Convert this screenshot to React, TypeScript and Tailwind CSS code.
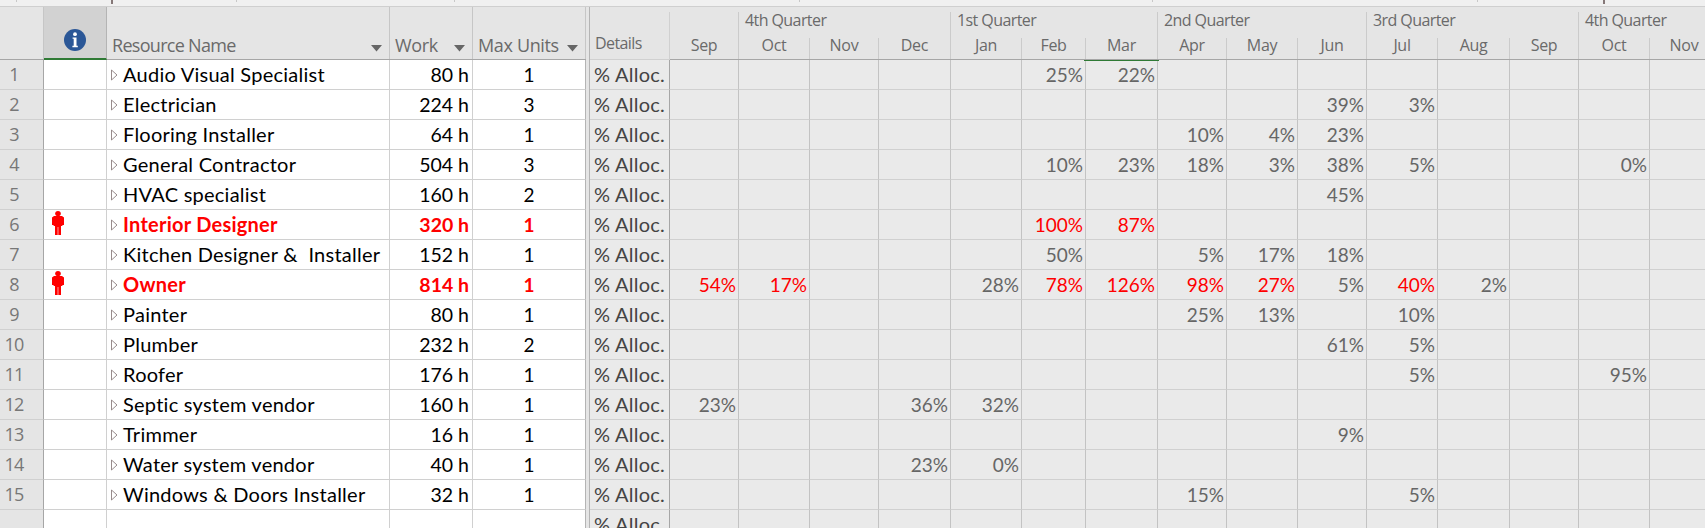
import { clsx } from "clsx";

type Resource = {
  name: string;
  work: string;
  units: number;
  over?: boolean;
  // keyed by month column index
  alloc: Record<number, string>;
  overMonths?: number[];
};

const resources: Resource[] = [
  { name: "Audio Visual Specialist", work: "80 h", units: 1, alloc: { 5: "25%", 6: "22%" } },
  { name: "Electrician", work: "224 h", units: 3, alloc: { 9: "39%", 10: "3%" } },
  { name: "Flooring Installer", work: "64 h", units: 1, alloc: { 7: "10%", 8: "4%", 9: "23%" } },
  {
    name: "General Contractor",
    work: "504 h",
    units: 3,
    alloc: { 5: "10%", 6: "23%", 7: "18%", 8: "3%", 9: "38%", 10: "5%", 13: "0%" },
  },
  { name: "HVAC specialist", work: "160 h", units: 2, alloc: { 9: "45%" } },
  {
    name: "Interior Designer",
    work: "320 h",
    units: 1,
    over: true,
    alloc: { 5: "100%", 6: "87%" },
    overMonths: [5, 6],
  },
  {
    name: "Kitchen Designer &  Installer",
    work: "152 h",
    units: 1,
    alloc: { 5: "50%", 7: "5%", 8: "17%", 9: "18%" },
  },
  {
    name: "Owner",
    work: "814 h",
    units: 1,
    over: true,
    alloc: {
      0: "54%", 1: "17%", 4: "28%", 5: "78%", 6: "126%",
      7: "98%", 8: "27%", 9: "5%", 10: "40%", 11: "2%",
    },
    overMonths: [0, 1, 5, 6, 7, 8, 10],
  },
  { name: "Painter", work: "80 h", units: 1, alloc: { 7: "25%", 8: "13%", 10: "10%" } },
  { name: "Plumber", work: "232 h", units: 2, alloc: { 9: "61%", 10: "5%" } },
  { name: "Roofer", work: "176 h", units: 1, alloc: { 10: "5%", 13: "95%" } },
  { name: "Septic system vendor", work: "160 h", units: 1, alloc: { 0: "23%", 3: "36%", 4: "32%" } },
  { name: "Trimmer", work: "16 h", units: 1, alloc: { 9: "9%" } },
  { name: "Water system vendor", work: "40 h", units: 1, alloc: { 3: "23%", 4: "0%" } },
  { name: "Windows & Doors Installer", work: "32 h", units: 1, alloc: { 7: "15%", 10: "5%" } },
];

const quarters = [
  { label: "", months: ["Sep"], widths: [69] },
  { label: "4th Quarter", months: ["Oct", "Nov", "Dec"], widths: [71, 69, 72] },
  { label: "1st Quarter", months: ["Jan", "Feb", "Mar"], widths: [71, 64, 72] },
  { label: "2nd Quarter", months: ["Apr", "May", "Jun"], widths: [69, 71, 69] },
  { label: "3rd Quarter", months: ["Jul", "Aug", "Sep"], widths: [71, 72, 69] },
  { label: "4th Quarter", months: ["Oct", "Nov"], widths: [71, 69] },
];

const monthWidths = quarters.flatMap((q) => q.widths);

const leftGrid = "grid grid-cols-[44px_63px_283px_83px_113px]";

function InfoIcon() {
  return (
    <svg width="22" height="22" viewBox="0 0 22 22">
      <circle cx="11" cy="11" r="11" fill="#2b5797" />
      <circle cx="11" cy="5.2" r="1.9" fill="#fff" />
      <path d="M8.6 8.4h3.9v8.4h1.3v1.4H8.4v-1.4h1.3V9.8H8.6z" fill="#fff" />
    </svg>
  );
}

function PersonIcon() {
  return (
    <svg width="12" height="24" viewBox="0 0 12 24" fill="#ff0000">
      <ellipse cx="6" cy="2.6" rx="2.8" ry="2.6" />
      <path d="M2 5h8l2 1.6V14h-1.6v1H9v9H6.3v-8h-.6v8H3v-9H1.6v-1H0V6.6z" />
    </svg>
  );
}

function DropArrow() {
  return (
    <svg width="11" height="7" viewBox="0 0 11 7" className="mb-[7px]">
      <path d="M0 0h11L5.5 6.5z" fill="#666" />
    </svg>
  );
}

function ExpandArrow() {
  return (
    <svg width="7" height="12" viewBox="0 0 7 12" fill="none" stroke="#8c7f7f" className="mr-[5px] shrink-0">
      <path d="M.5 1v10L6 6z" strokeWidth="0.9" />
    </svg>
  );
}

function HeaderCell({ label, tight }: { label: string; tight?: boolean }) {
  return (
    <div className="flex items-end justify-between border-r border-[#c6c6c6] pl-[5px] pr-[7px]">
      <span className={clsx("text-[18px] leading-[27px]", tight ? "tracking-[-0.7px]" : "tracking-[-0.35px]")}>
        {label}
      </span>
      <DropArrow />
    </div>
  );
}

function ResourceTable() {
  return (
    <div className="w-[586px] shrink-0 bg-white">
      <div className={clsx(leftGrid, "h-[53px] border-b border-[#a6a6a6] bg-[#e5e5e5] text-[#6a6a6a]")}>
        <div className="border-r border-[#c6c6c6]" />
        <div className="-mb-px flex items-center justify-center border-r border-b-2 border-r-[#b4b4b4] border-b-[#2f7a35] bg-[#d2d2d2] pt-[15px]">
          <InfoIcon />
        </div>
        <HeaderCell label="Resource Name" tight />
        <HeaderCell label="Work" />
        <HeaderCell label="Max Units" />
      </div>
      {[...resources, null].map((r, i) => (
        <div
          key={i}
          className={clsx(
            leftGrid,
            "h-[30px] font-['Lato',sans-serif] text-[19px] leading-[29px]",
            r?.over ? "font-bold text-[#ff0000]" : "text-black"
          )}
        >
          <div className="border-r border-b border-r-[#a6a6a6] border-b-[#d0d0d0] bg-[#e5e5e5] pr-[15px] text-center font-['Open_Sans',sans-serif] text-[18px] font-normal tracking-[-0.8px] text-[#777]">
            {r && i + 1}
          </div>
          <div className="border-r border-b border-[#d0d0d0] pt-[1px] pl-[8px]">{r?.over && <PersonIcon />}</div>
          <div className="flex items-center border-r border-b border-[#d0d0d0] pl-[4px] text-[20px] tracking-[0.25px] whitespace-pre">
            {r && <ExpandArrow />}
            {r?.name}
          </div>
          <div className="border-r border-b border-[#d0d0d0] pr-[3px] text-right text-[19.5px]">{r?.work}</div>
          <div className="border-r border-b border-r-[#b4b4b4] border-b-[#d0d0d0] text-center">{r?.units}</div>
        </div>
      ))}
    </div>
  );
}

function Timescale() {
  return (
    <div className="flex h-[53px] bg-[#e5e5e5] text-[16px] tracking-[-0.3px] text-[#6a6a6a]">
      <div className="flex w-[80px] shrink-0 items-end border-b border-[#d0d0d0] pt-[5px]">
        <span className="h-full w-[80px] border-r border-[#d0d0d0] pt-[19px] pl-[5px] leading-[24px] tracking-[-0.6px]">
          Details
        </span>
      </div>
      {quarters.map((q, qi) => (
        <div key={qi} className="shrink-0 border-b border-[#a6a6a6] pt-[5px]">
          <div className="h-full border-r border-[#cbcbcb]">
            <div className="h-[26px] pl-[6px] leading-[17px] tracking-[-0.58px]">{q.label}</div>
            <div className="flex h-[21px]">
              {q.months.map((m, mi) => (
                <div
                  key={mi}
                  style={{ width: q.widths[mi] - (mi === q.months.length - 1 ? 1 : 0) }}
                  className={clsx("text-center leading-[14px]", mi < q.months.length - 1 && "border-r border-[#cbcbcb]")}
                >
                  {m}
                </div>
              ))}
            </div>
          </div>
        </div>
      ))}
    </div>
  );
}

function UsageGrid() {
  return (
    <div className="relative min-w-0 flex-1 overflow-hidden bg-[#eaeaea]">
      <Timescale />
      {/* marker under the current month */}
      <div className="absolute top-[53px] left-[494px] h-px w-[75px] bg-[#2f7a35]" />
      {[...resources, null].map((r, i) => (
        <div key={i} className="flex h-[30px] font-['Lato',sans-serif] text-[19px] leading-[29px] text-[#666]">
          <div className="w-[80px] shrink-0 border-r border-b border-r-[#a6a6a6] border-b-[#d0d0d0] pl-[4px] text-[20px] tracking-[0.25px] whitespace-nowrap text-[#444]">
            % Alloc.
          </div>
          {monthWidths.map((w, m) => (
            <div
              key={m}
              style={{ width: w }}
              className={clsx(
                "shrink-0 border-r border-b border-r-[#c3c3c3] border-b-[#d0d0d0] pr-[2px] text-right",
                r?.overMonths?.includes(m) && "text-[#ff0000]"
              )}
            >
              {r?.alloc[m]}
            </div>
          ))}
        </div>
      ))}
    </div>
  );
}

// bottom edge of the ribbon, with the ends of its separators
const ribbonTicks = [
  { gap: 16 },
  { gap: 94, dark: true },
  { gap: 123 },
  { gap: 217 },
  { gap: 344 },
  { gap: 352 },
  { gap: 324 },
  { gap: 125, dark: true },
];

export default function App() {
  return (
    <div className="flex h-[528px] w-[1705px] flex-col overflow-hidden bg-[#e5e5e5] font-['Open_Sans',sans-serif]">
      <div className="flex h-[7px] shrink-0 items-start border-b border-[#cfcfcf] bg-[#f0f0f0]">
        {ribbonTicks.map((t, i) => (
          <div
            key={i}
            style={{ marginLeft: t.gap }}
            className={clsx("shrink-0", t.dark ? "h-[4px] w-[2px] bg-[#857777]" : "h-[2px] w-px bg-[#c8c8c8]")}
          />
        ))}
      </div>
      <div className="flex">
        <ResourceTable />
        <div className="w-[4px] shrink-0 border-r border-[#b4b4b4] bg-[#e5e5e5]" />
        <UsageGrid />
      </div>
    </div>
  );
}
